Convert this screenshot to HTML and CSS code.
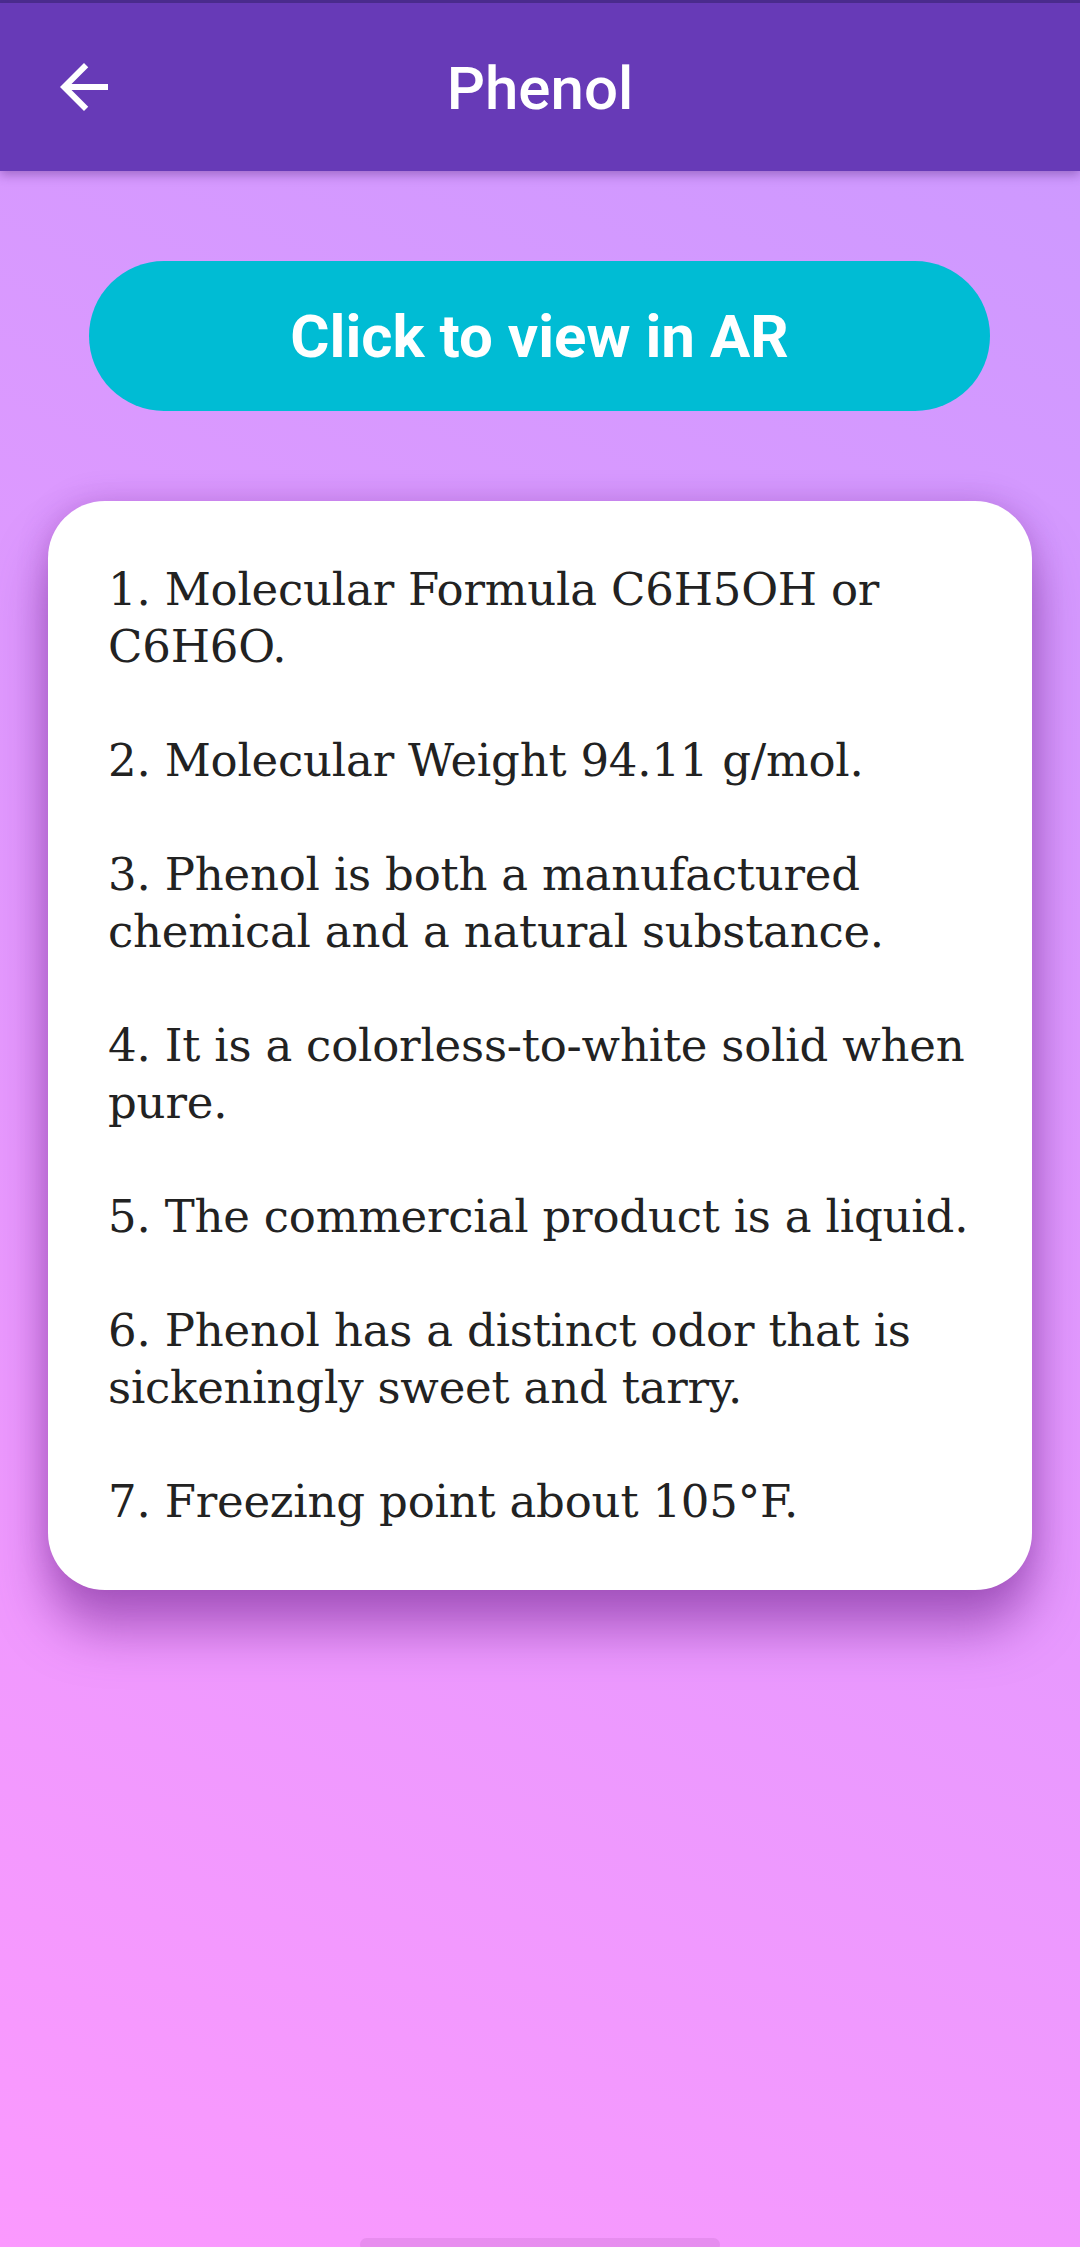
FILE: index.html
```html
<!DOCTYPE html>
<html lang="en">
<head>
<meta charset="utf-8">
<title>Phenol</title>
<link rel="stylesheet" href="styles.css">
</head>
<body>
<div class="screen">
  <div class="status-strip"></div>
  <header class="app-bar">
    <button class="back-btn" aria-label="Back">
      <svg viewBox="0 0 24 24" width="72" height="72"><path fill="#fff" d="M20 11H7.83l5.59-5.59L12 4l-8 8 8 8 1.41-1.41L7.83 13H20v-2z"/></svg>
    </button>
    <h1 class="title">Phenol</h1>
  </header>
  <main class="content">
    <button class="ar-btn">Click to view in AR</button>
    <section class="card">
      <p class="item">1. Molecular Formula C6H5OH or<br>C6H6O.</p>
      <p class="item">2. Molecular Weight 94.11 g/mol.</p>
      <p class="item">3. Phenol is both a manufactured<br>chemical and a natural substance.</p>
      <p class="item">4. It is a colorless-to-white solid when<br>pure.</p>
      <p class="item">5. The commercial product is a liquid.</p>
      <p class="item">6. Phenol has a distinct odor that is<br>sickeningly sweet and tarry.</p>
      <p class="item">7. Freezing point about 105°F.</p>
    </section>
  </main>
  <div class="nav-handle"></div>
</div>
</body>
</html>
```

FILE: styles.css
```css
* { box-sizing: border-box; }
html, body {
  margin: 0;
  padding: 0;
}
body {
  width: 1080px;
  height: 2247px;
  overflow: hidden;
  font-family: Roboto, "Noto Sans", sans-serif;
}
.screen {
  position: relative;
  width: 1080px;
  height: 2247px;
  background: linear-gradient(205.67deg, #cb99ff 0%, #fb99fe 100%);
  display: flex;
  flex-direction: column;
}
.status-strip {
  height: 3px;
  background: #4b2d90;
}
.app-bar {
  position: relative;
  z-index: 2;
  height: 168px;
  background: #673ab7;
  display: flex;
  align-items: center;
  justify-content: center;
  box-shadow: 0 4px 10px rgba(60, 20, 100, 0.35);
}
.back-btn {
  position: absolute;
  left: 48px;
  top: 48px;
  width: 72px;
  height: 72px;
  padding: 0;
  border: 0;
  background: transparent;
  display: flex;
}
.title {
  margin: 0;
  color: #fff;
  font-family: Roboto, sans-serif;
  font-weight: 500;
  font-size: 60px;
  line-height: 1;
  position: relative;
  top: 2px;
}
.content {
  display: flex;
  flex-direction: column;
  align-items: flex-start;
  padding-top: 90px;
}
.ar-btn {
  margin-left: 89px;
  width: 901px;
  height: 150px;
  border: 0;
  border-radius: 75px;
  background: #00bcd4;
  color: #fff;
  font-family: Roboto, sans-serif;
  font-weight: 700;
  font-size: 60px;
  padding: 0;
}
.card {
  margin-top: 90px;
  margin-left: 48px;
  width: 984px;
  background: #fff;
  border-radius: 57px;
  padding: 60px;
  box-shadow: 0 40px 50px 0 rgba(110, 30, 140, 0.5), 0 0 30px rgba(110, 30, 140, 0.25);
}
.item {
  margin: 0 0 57px 0;
  font-family: "DejaVu Serif", "Liberation Serif", serif;
  font-size: 45px;
  line-height: 57px;
  letter-spacing: -0.2px;
  color: #222;
  white-space: nowrap;
}
.item:last-child { margin-bottom: 0; }
.nav-handle {
  position: absolute;
  left: 360px;
  bottom: -4px;
  width: 360px;
  height: 13px;
  border-radius: 7px;
  background: rgba(120, 60, 130, 0.12);
}
```
